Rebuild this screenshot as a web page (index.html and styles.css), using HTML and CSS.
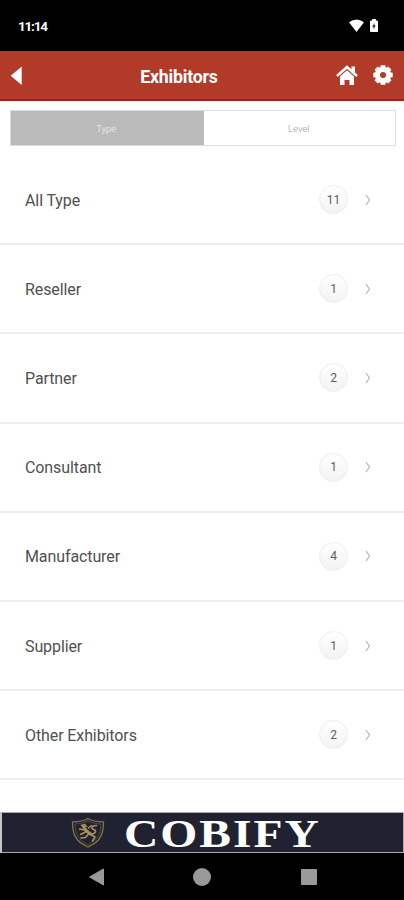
FILE: index.html
```html
<!DOCTYPE html>
<html lang="en">
<head>
<meta charset="utf-8">
<title>Exhibitors</title>
<link rel="stylesheet" href="styles.css">
</head>
<body>
<div class="status">
  <span class="time">11:14</span>
  <svg width="32" height="16" viewBox="0 0 32 16"><path d="M1 4.200Q8.500-1.200 16 4.200L8.500 14Z" fill="#fff"/><path d="M22.500 3h2V1.500h3V3h2v10.500h-7z" fill="#fff" stroke="#fff" stroke-linejoin="round"/><path d="M26.500 5l-2.500 3.700h1.600v2.800l2.200-4h-1.400z" fill="#333"/></svg>
</div>
<header class="header">
  <svg class="back" width="12" height="20" viewBox="0 0 12 20"><path d="M11.700.5v18.500L.7 9.700z" fill="#fff"/></svg>
  <h1>Exhibitors</h1>
  <div class="actions">
    <svg width="22" height="21" viewBox="0 0 22 21"><path d="M1 11L11 2 21 11" fill="none" stroke="#fff" stroke-width="2.500"/><path d="M15.500 1.500h3.500v6.500l-3.500-3.200z" fill="#fff"/><path d="M4 11.500l7-6.200 7 6.200V20h-4.500v-5H8.500v5H4z" fill="#fff"/></svg>
    <svg width="20" height="20" viewBox="0 0 20 20"><g fill="#fff"><path id="tooth" d="M7.700.3h4.600l.7 4H7zM7.700 19.700h4.600l.7-4H7z"/><use href="#tooth" transform="rotate(45 10 10)"/><use href="#tooth" transform="rotate(90 10 10)"/><use href="#tooth" transform="rotate(135 10 10)"/></g><circle cx="10" cy="10" r="5.500" fill="none" stroke="#fff" stroke-width="5"/></svg>
  </div>
</header>
<main class="content">
  <div class="tabs"><div class="tab active">Type</div><div class="tab">Level</div></div>
  <ul class="list">
    <li><span class="name">All Type</span><span class="count">11</span><svg class="chev" viewBox="0 0 6 12"><path d="M1 1l3.500 5L1 11"/></svg></li>
    <li><span class="name">Reseller</span><span class="count">1</span><svg class="chev" viewBox="0 0 6 12"><path d="M1 1l3.500 5L1 11"/></svg></li>
    <li><span class="name">Partner</span><span class="count">2</span><svg class="chev" viewBox="0 0 6 12"><path d="M1 1l3.500 5L1 11"/></svg></li>
    <li><span class="name">Consultant</span><span class="count">1</span><svg class="chev" viewBox="0 0 6 12"><path d="M1 1l3.500 5L1 11"/></svg></li>
    <li><span class="name">Manufacturer</span><span class="count">4</span><svg class="chev" viewBox="0 0 6 12"><path d="M1 1l3.500 5L1 11"/></svg></li>
    <li><span class="name">Supplier</span><span class="count">1</span><svg class="chev" viewBox="0 0 6 12"><path d="M1 1l3.500 5L1 11"/></svg></li>
    <li><span class="name">Other Exhibitors</span><span class="count">2</span><svg class="chev" viewBox="0 0 6 12"><path d="M1 1l3.500 5L1 11"/></svg></li>
  </ul>
</main>
<div class="banner">
  <svg class="crest" width="34" height="32" viewBox="0 0 34 32"><g fill="none" stroke="#857446" stroke-linecap="round" stroke-linejoin="round"><path stroke-width="1.300" d="M17 1.500c-4 2.600-9 3.300-15.500 3.300 0 11 2 19.500 15.500 25.200 13.500-5.700 15.500-14.200 15.500-25.200C26 4.800 21 4.100 17 1.500z"/><path stroke-width=".5" d="M17 4c-4 2-8 2.800-13 2.900C4.300 16 6.500 23 17 27.600 27.500 23 29.700 16 30 6.900 25 6.800 21 6 17 4z"/></g><g fill="none" stroke="#a8925a" stroke-width="1.600" stroke-linecap="round" stroke-linejoin="round"><path stroke-width="3" d="M12.500 9.500l2.500 4 4.500 3.500"/><path d="M10.500 8.500l3-1 2 2M14 13l-5.500-1M14.500 15l-5 2.500M19 17l5 3-2.500 4M17.500 17l-3 3.500-4.500.5M21 17c5-1 4-4 1.500-4.500s-2-4 3-4M17.500 11l3-2.500"/></g></svg>
  <svg class="brand" width="196" height="38" viewBox="0 0 196 38"><text transform="translate(-1 32.500) scale(1.220 1)">COBIFY</text></svg>
</div>
<nav class="nav">
  <svg width="17" height="20" viewBox="0 0 17 20"><path d="M15.500 2v16L1.500 10z" fill="#999" stroke="#999" stroke-linejoin="round"/></svg>
  <span class="circle"></span>
  <span class="square"></span>
</nav>
</body>
</html>
```
FILE: styles.css
```css
* { box-sizing: border-box; }
body {
  margin: 0;
  width: 404px;
  height: 900px;
  overflow: hidden;
  display: flex;
  flex-direction: column;
  background: #fff;
  font-family: Roboto, sans-serif;
}
svg { display: block; flex: none; }
.status {
  flex: none;
  height: 51px;
  padding: 1px 24px 0 18px;
  display: flex;
  align-items: center;
  justify-content: space-between;
  background: #000;
  color: #fff;
}
.time {
  font-size: 13.500px;
  font-weight: 700;
  letter-spacing: -1.200px;
}
.header {
  flex: none;
  height: 50px;
  padding: 0 11px 0 10px;
  display: grid;
  grid-template-columns: 56px 1fr 56px;
  align-items: center;
  background: #b13a28;
  border-bottom: 2px solid #a52019;
  color: #fff;
}
.back { margin-top: 2px; }
.header h1 {
  margin: 3px 0 0;
  padding-right: 45px;
  font-size: 17.700px;
  font-weight: 700;
  letter-spacing: -.200px;
  line-height: 20px;
  text-align: center;
}
.actions { display: flex; gap: 15px; justify-content: flex-end; align-items: center; }
.content { flex: none; height: 711px; padding-top: 9px; }
.tabs {
  display: flex;
  height: 36px;
  margin: 0 8px 0 10px;
  border: 1px solid #ddd;
}
.tab {
  flex: 1;
  display: flex;
  align-items: center;
  justify-content: center;
  font-size: 9.500px;
  font-weight: 300;
  color: #999;
}
.tab:last-child { padding-right: 1px; }
.tab.active { background: #bababa; color: #f5f5f5; padding-right: 2px; }
.list { list-style: none; margin: 10px 0 0; padding: 0; }
.list li {
  height: 89.200px;
  display: flex;
  align-items: center;
  padding: 0 33px 0 25px;
  border-bottom: 2px solid #ededed;
}
.name { flex: 1; padding-top: 1px; color: #505050; font-size: 16px; letter-spacing: -.100px; }
.count {
  width: 29px;
  height: 29px;
  margin-right: 17px;
  border-radius: 50%;
  border: 1px solid #eee;
  background: linear-gradient(#fff, #f3f3f3);
  display: flex;
  align-items: center;
  justify-content: center;
  font-size: 12px;
  color: #5c5c5c;
}
.chev { width: 6px; height: 12px; fill: none; stroke: #b0b0b0; stroke-width: 1.100; }
.banner {
  flex: none;
  height: 41px;
  display: flex;
  align-items: center;
  border: 1px solid #aaa;
  border-left: 2px solid #c4c4c4;
  background: #202231;
  padding-left: 69px;
}
.brand { margin-left: 20px; overflow: visible; }
.brand text { font: 700 39px "Liberation Serif", serif; letter-spacing: 1.600px; fill: #fff; }
.nav {
  flex: 1;
  display: flex;
  align-items: center;
  background: #000;
  padding-left: 88px;
}
.circle { width: 18px; height: 18px; border-radius: 50%; background: #999; margin-left: 88px; }
.square { width: 16px; height: 16px; border-radius: 1px; background: #999; margin-left: 90px; }
```
